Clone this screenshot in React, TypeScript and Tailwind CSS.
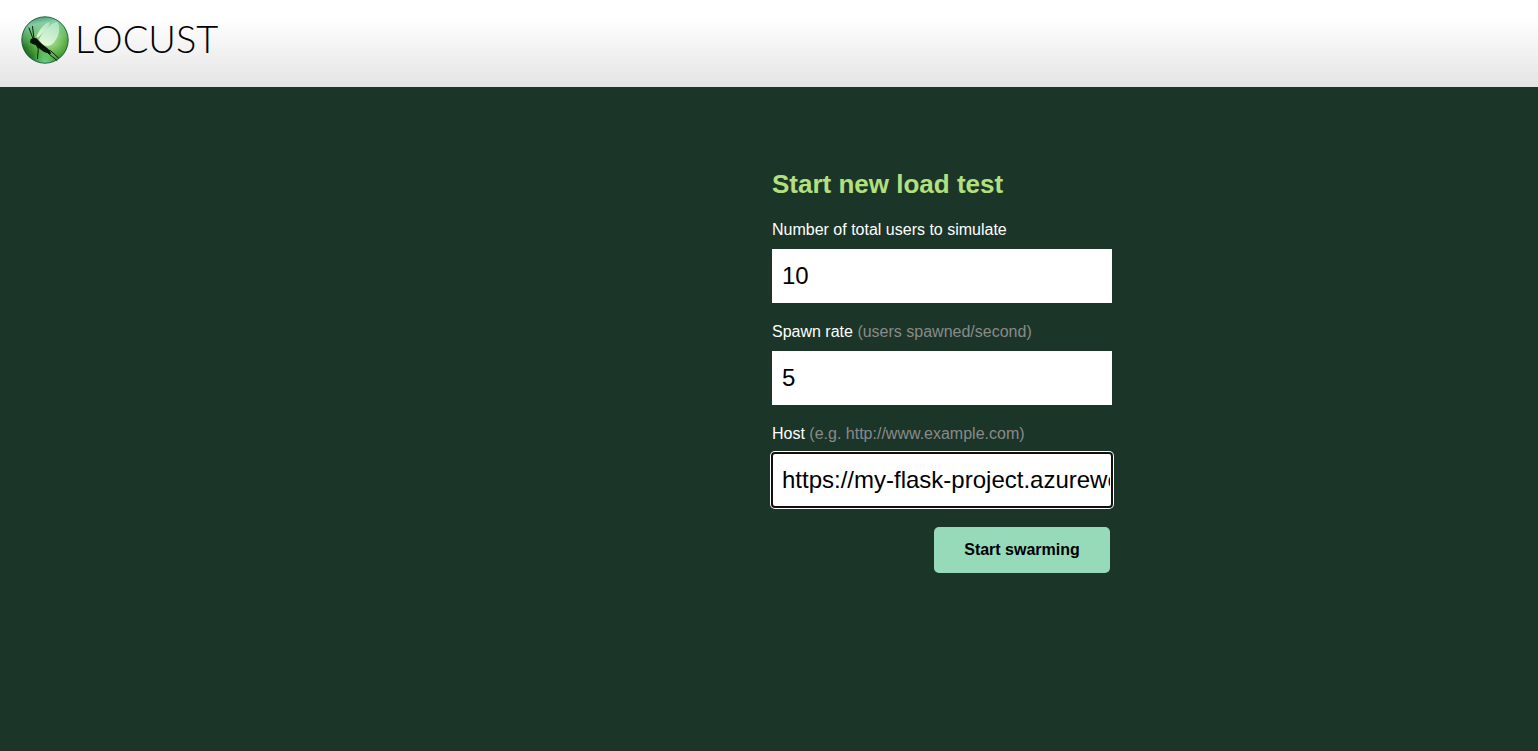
import type { InputHTMLAttributes } from "react";

function LocustMark() {
  return (
    <svg viewBox="0 0 48 48" className="size-12 shrink-0" aria-hidden="true">
      <defs>
        <radialGradient id="orb" cx="0.6" cy="0.45" r="0.62">
          <stop offset="0" stopColor="#c9f2bd" />
          <stop offset="0.35" stopColor="#86cc70" />
          <stop offset="0.7" stopColor="#459f33" />
          <stop offset="1" stopColor="#1c6325" />
        </radialGradient>
        <linearGradient id="sheen" x1="0" y1="0" x2="0.15" y2="1">
          <stop offset="0" stopColor="#2f8a6a" stopOpacity="0.9" />
          <stop offset="0.2" stopColor="#8fd3b8" stopOpacity="0.85" />
          <stop offset="0.55" stopColor="#7fcf90" stopOpacity="0.25" />
          <stop offset="0.7" stopColor="#3f9a2c" stopOpacity="0" />
        </linearGradient>
        <radialGradient id="floor" cx="0.5" cy="1" r="0.3">
          <stop offset="0" stopColor="#7ff0a8" stopOpacity="0.8" />
          <stop offset="1" stopColor="#7ff0a8" stopOpacity="0" />
        </radialGradient>
        <linearGradient id="wing" x1="0.8" y1="0" x2="0.3" y2="1">
          <stop offset="0" stopColor="#b4e6c6" stopOpacity="0.9" />
          <stop offset="1" stopColor="#e6f8de" stopOpacity="0.95" />
        </linearGradient>
      </defs>
      <circle cx="24" cy="24" r="23.3" fill="url(#orb)" />
      <circle cx="24" cy="24" r="23.3" fill="url(#sheen)" />
      <circle cx="24" cy="24" r="23.3" fill="url(#floor)" />
      <circle cx="24" cy="24" r="23.2" fill="none" stroke="#1d5f3a" strokeWidth="0.9" />
      <path d="M15.500 21C18 13 25 5.500 28.500 6.500C29.500 9 24 15 17 21.500Z" fill="url(#wing)" />
      <path d="M18 23.500C22 15 32 4.500 36.500 6.500C41 13 36 26 29 29.500C24 31 20 28 18 23.500Z" fill="url(#wing)" />
      <path
        d="M9 26.500L9.600 23.300L12.700 21.700L15.800 22.500L17.700 24.800L21.500 28.500L26.500 32.300L30.500 37.500L29 38L23 36L17.500 32L14.500 29L11.500 28Z"
        fill="#071109"
      />
      <path
        d="M12 22.500L8 12M13 22.500L11.500 10.500M15 28L17.300 33L16.500 42.500M22 32L28 38L36 44.500M25 33L30 35L37.500 42"
        fill="none"
        stroke="#0b1e0d"
        strokeWidth="1"
        strokeLinecap="round"
        strokeLinejoin="round"
      />
    </svg>
  );
}

type FieldProps = InputHTMLAttributes<HTMLInputElement> & {
  id: string;
  label: string;
  hint?: string;
  highlighted?: boolean;
};

function Field({ id, label, hint, highlighted, ...input }: FieldProps) {
  const ring = highlighted
    ? "rounded-[3px] ring-2 ring-white outline-2 -outline-offset-1 outline-[#101010]"
    : "outline-none";
  return (
    <div className="flex flex-col gap-[9px]">
      <label htmlFor={id} className="text-base leading-5 text-white">
        {label} {hint && <span className="text-[#8a8a8a]">{hint}</span>}
      </label>
      <input
        id={id}
        name={id}
        className={`h-[54px] w-full bg-white pr-0.5 pl-2.5 text-2xl text-black ${ring}`}
        {...input}
      />
    </div>
  );
}

export default function App() {
  return (
    <div className="flex min-h-screen flex-col bg-[#1c3529] font-['Liberation_Sans',Arial,sans-serif]">
      <header className="bg-linear-to-b from-white from-20% to-[#e4e4e4] px-[21px] pt-4 pb-[23px]">
        <a href="/" className="flex w-fit items-start gap-1.5 text-black">
          <LocustMark />
          <span className="font-['Lato',sans-serif] text-[38px] leading-[44px] font-light">LOCUST</span>
        </a>
      </header>
      <main className="ml-[50%] w-[343px] pt-20 pl-[3px]">
        <form className="flex flex-col" onSubmit={(event) => event.preventDefault()}>
          <h2 className="text-[26px] leading-[34px] font-bold text-[#b3e07e]">Start new load test</h2>
          <div className="mt-[19px] flex flex-col gap-[19px]">
            <Field id="user_count" label="Number of total users to simulate" defaultValue="10" />
            <Field id="spawn_rate" label="Spawn rate" hint="(users spawned/second)" defaultValue="5" />
            <Field
              id="host"
              label="Host"
              hint="(e.g. http://www.example.com)"
              defaultValue="https://my-flask-project.azurewebsites.net"
              highlighted
            />
          </div>
          <button
            type="submit"
            className="mt-5 mr-0.5 h-[46px] w-44 self-end rounded-[5px] bg-[#96dab9] text-base font-bold text-black"
          >
            Start swarming
          </button>
        </form>
      </main>
    </div>
  );
}
